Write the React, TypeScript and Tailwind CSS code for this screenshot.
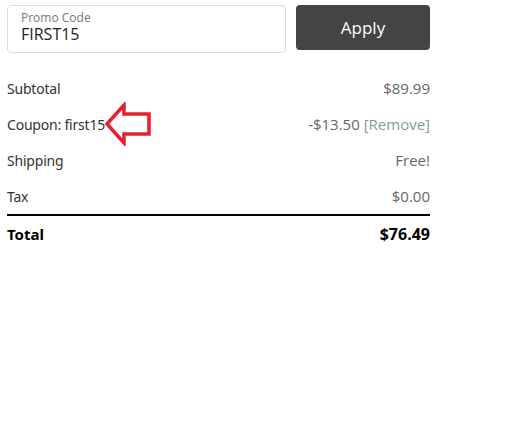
import React from "react";

function Arrow() {
  return (
    <svg width="48" height="44" viewBox="0 0 48 44" className="absolute left-full top-[-12px] ml-[-1px]">
      <path
        d="M3 22 L20 3 L20 12 L45 12 L45 32 L20 32 L20 41 Z"
        fill="none"
        stroke="#e8202a"
        strokeWidth="3.5"
        strokeLinejoin="miter"
      />
    </svg>
  );
}

export default function App() {
  const label = "text-[14px] text-[#333] [font-family:'Noto_Sans',sans-serif] tracking-[-0.2px]";
  const value = "text-[15px] text-[#666] [font-family:'Open_Sans',sans-serif]";
  return (
    <div className="w-[520px] h-[436px] bg-white pl-[7px] pt-[5px]">
      <div className="w-[423px]">
        <div className="flex gap-[10px] items-start">
          <div className="w-[279px] h-[48px] border border-[#dcdcdc] rounded-[4px] pl-[13px] pt-[4px] [font-family:'Open_Sans',sans-serif]">
            <div className="text-[12px] leading-[16px] text-[#777]">Promo Code</div>
            <div className="text-[16px] leading-[17px] text-[#222]">FIRST15</div>
          </div>
          <button className="w-[134px] h-[45px] bg-[#444] rounded-[4px] text-white text-[17px] [font-family:'Open_Sans',sans-serif]">
            Apply
          </button>
        </div>
        <div className="mt-[17px]">
          <div className="flex justify-between items-center h-[36px]">
            <span className={label}>Subtotal</span>
            <span className={value}>$89.99</span>
          </div>
          <div className="flex justify-between items-center h-[36px]">
            <span className={`${label} relative`}>
              Coupon: first15
              <Arrow />
            </span>
            <span className={value}>
              -$13.50 <span className="text-[#7a9ea2]">[Remove]</span>
            </span>
          </div>
          <div className="flex justify-between items-center h-[37px]">
            <span className={label}>Shipping</span>
            <span className={value}>Free!</span>
          </div>
          <div className="flex justify-between items-center h-[35px]">
            <span className={label}>Tax</span>
            <span className={value}>$0.00</span>
          </div>
          <div className="h-[2px] bg-black" />
          <div className="flex justify-between items-center h-[36px]">
            <span className="text-[15px] font-bold text-black [font-family:'Noto_Sans',sans-serif]">Total</span>
            <span className="text-[16px] font-bold text-black [font-family:'Open_Sans',sans-serif]">$76.49</span>
          </div>
        </div>
      </div>
    </div>
  );
}
